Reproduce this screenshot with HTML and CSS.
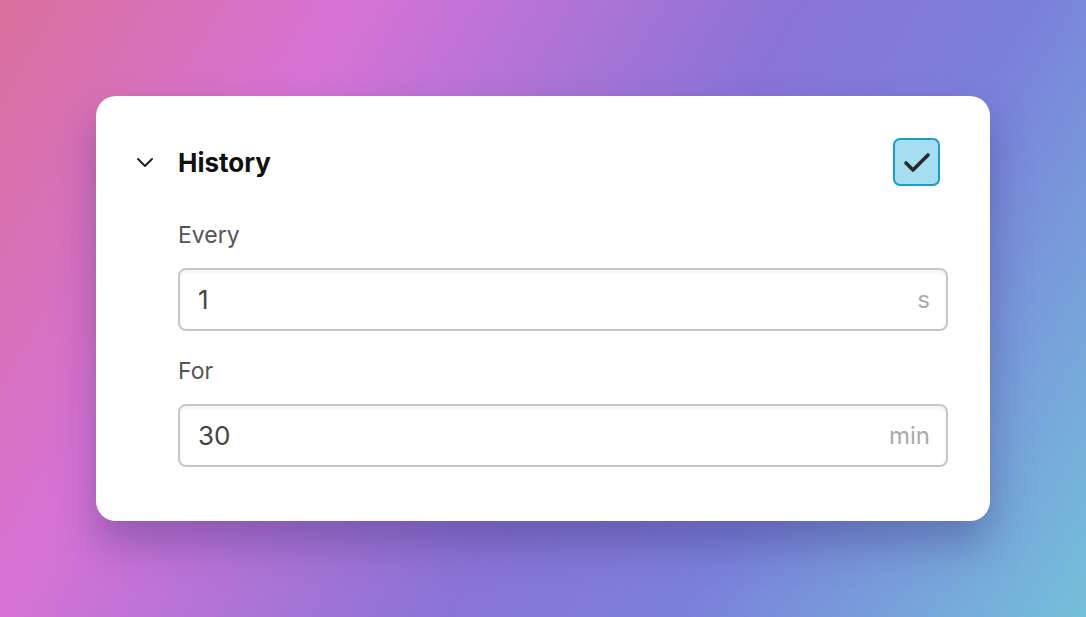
FILE: index.html
```html
<!DOCTYPE html>
<html lang="en">
<head>
    <meta charset="UTF-8">
    <meta name="viewport" content="width=device-width, initial-scale=1.0">
    <title>History Settings</title>
    <link rel="stylesheet" href="styles.css">
</head>
<body>

    <div class="panel">
        <div class="panel-header">
            <svg class="chevron" width="18" height="12" viewBox="0 0 18 12">
                <path d="M2 3 L9 10 L16 3" fill="none" stroke="#222" stroke-width="2" stroke-linecap="round" stroke-linejoin="round"/>
            </svg>
            <h2 class="title">History</h2>
            <label class="check">
                <input type="checkbox" checked>
                <svg width="30" height="24" viewBox="0 0 30 24">
                    <path d="M4 13 L11 20 L26 5" fill="none" stroke="#2a2a2a" stroke-width="3.6" stroke-linecap="round" stroke-linejoin="round"/>
                </svg>
            </label>
        </div>

        <div class="panel-body">
            <label class="field-label" for="every">Every</label>
            <div class="field">
                <input type="text" id="every" value="1">
                <span class="unit">s</span>
            </div>

            <label class="field-label" for="for">For</label>
            <div class="field">
                <input type="text" id="for" value="30">
                <span class="unit">min</span>
            </div>
        </div>
    </div>

</body>
</html>
```

FILE: styles.css
```css
        html, body {
            height: 100%;
        }
        body {
            margin: 0;
            font-family: Inter, "Noto Sans", sans-serif;
            background: linear-gradient(120deg, #da709c 0%, #d673d6 25%, #8a74d6 55%, #7b80da 72%, #74c0da 100%);
            padding-top: 96px;
            box-sizing: border-box;
        }
        .panel {
            margin-left: 96px;
            width: 894px;
            height: 425px;
            box-sizing: border-box;
            background: #fff;
            border-radius: 20px;
            padding: 42px 50px 0 40px;
            box-shadow: 0 22px 40px rgba(50, 40, 110, 0.35);
        }
        .panel-header {
            display: flex;
            align-items: center;
            height: 48px;
        }
        .chevron {
            width: 18px;
            margin-right: 24px;
        }
        .title {
            flex: 1;
            margin: 0;
            font-size: 26px;
            font-weight: 700;
            color: #111;
        }
        .check {
            position: relative;
            width: 47px;
            height: 48px;
            box-sizing: border-box;
            border: 2px solid #1d9dc6;
            border-radius: 7px;
            background: #a5def0;
            display: flex;
            align-items: center;
            justify-content: center;
        }
        .check input {
            position: absolute;
            opacity: 0;
            margin: 0;
        }
        .panel-body {
            padding-left: 42px;
            margin-right: -8px;
        }
        .field-label {
            display: block;
            font-size: 23px;
            color: #555;
            margin-top: 34px;
            height: 30px;
            line-height: 30px;
        }
        .field-label + .field {
            margin-top: 18px;
        }
        .field ~ .field-label {
            margin-top: 25px;
        }
        .field {
            display: flex;
            align-items: center;
            height: 63px;
            box-sizing: border-box;
            border: 2px solid #c6c6c6;
            border-radius: 8px;
            padding: 0 16px 0 18px;
            box-shadow: inset 0 2px 4px rgba(0, 0, 0, 0.06);
        }
        .field input {
            flex: 1;
            border: none;
            outline: none;
            background: transparent;
            font-family: inherit;
            font-size: 26px;
            color: #444;
            padding: 0;
            min-width: 0;
        }
        .unit {
            font-size: 24px;
            color: #aaa;
        }
```
